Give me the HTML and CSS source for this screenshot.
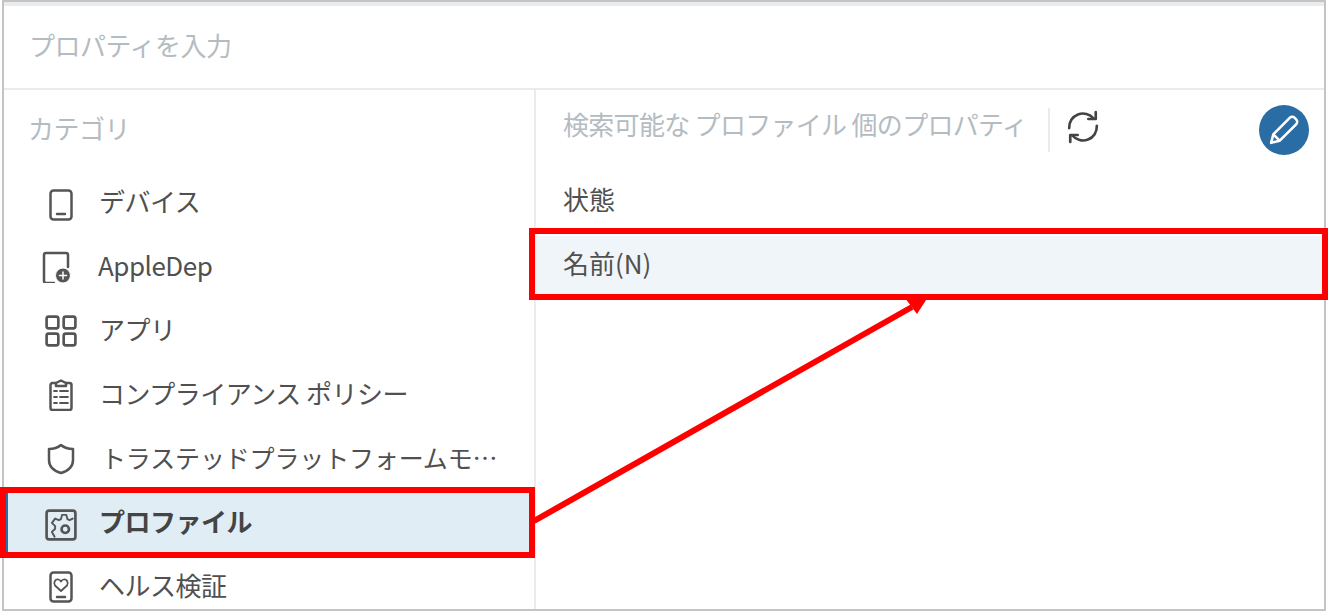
FILE: index.html
```html
<!DOCTYPE html>
<html lang="ja">
<head>
  <meta charset="UTF-8">
  <title>プロパティ</title>
  <link rel="stylesheet" href="styles.css">
</head>
<body>
  <div class="panel">
    <!-- Search -->
    <div class="search-row">プロパティを入力</div>

    <div class="columns">
      <!-- Categories -->
      <div class="categories">
        <div class="categories-title">カテゴリ</div>
        <div class="category">
          <svg class="icon icon-low" viewBox="0 0 24 32"><rect x="1.5" y="1.5" width="21" height="29" rx="3"/><line x1="8" x2="16" y1="25" y2="25"/></svg>
          <span class="category-name">デバイス</span>
        </div>
        <div class="category category-shift">
          <svg class="icon icon-apple" viewBox="0 0 32 32"><path d="M26 16V4a2 2 0 0 0-2-2H4a2 2 0 0 0-2 2v26a2 2 0 0 0 2 2h8"/><circle class="solid" cx="21" cy="24.500" r="7.500"/><path class="plus" d="M21 21v7M17.500 24.500h7"/></svg>
          <span class="category-name">AppleDep</span>
        </div>
        <div class="category">
          <svg class="icon" viewBox="0 0 30 30"><rect x="1.5" y="1.5" width="11" height="11" rx="2"/><rect x="17.5" y="1.5" width="11" height="11" rx="2"/><rect x="1.5" y="17.5" width="11" height="11" rx="2"/><rect x="17.5" y="17.5" width="11" height="11" rx="2"/></svg>
          <span class="category-name">アプリ</span>
        </div>
        <div class="category">
          <svg class="icon" viewBox="0 0 24 32"><path d="M7 4H3.500a2 2 0 0 0-2 2v23a2 2 0 0 0 2 2h17a2 2 0 0 0 2-2V6a2 2 0 0 0-2-2H17"/><path d="M7 7V4l5-2.500L17 4v3z"/><path class="thin" d="M5 12h3M11 12h8M5 18h3M11 18h8M5 24h3M11 24h8"/></svg>
          <span class="category-name">コンプライアンス ポリシー</span>
        </div>
        <div class="category">
          <svg class="icon" viewBox="0 0 28 32"><path d="M14 2c3 2.500 7 4 12 4v11c0 6.500-5 11-12 13C7 28 2 23.500 2 17V6c5 0 9-1.500 12-4z"/></svg>
          <span class="category-name category-long">トラステッドプラットフォームモ…</span>
        </div>
        <div class="category selected">
          <svg class="icon icon-low" viewBox="0 0 30 30"><rect x="1.500" y="1.500" width="27" height="27" rx="2.500"/><circle cx="19" cy="19" r="3.500"/><path class="thin" d="M26 9l-3 1.500-2-1-1-4h-4l-1 4-2 1-3.500-1.500-3 4 3 3v2.500l-3 3 2.500 4.500"/></svg>
          <span class="category-name">プロファイル</span>
        </div>
        <div class="category">
          <svg class="icon" viewBox="0 0 24 32"><rect x="1.5" y="1.5" width="21" height="29" rx="3"/><line x1="8" x2="16" y1="26" y2="26"/><path class="thin" d="M12 20l-6-5.500c-2-3 .5-7 3.500-6 1 .3 2 1 2.500 2 .5-1 1.500-1.700 2.500-2 3-1 5.500 3 3.500 6z"/></svg>
          <span class="category-name">ヘルス検証</span>
        </div>
      </div>

      <!-- Properties -->
      <div class="properties">
        <div class="properties-head">
          <span class="properties-title">検索可能な プロファイル 個のプロパティ</span>
          <span class="head-divider"></span>
          <svg class="refresh" viewBox="0 0 32 32"><path d="M3 17A13 13 0 0 1 26 8"/><path d="M28 2v6.500h-7"/><path d="M29 15A13 13 0 0 1 6 24"/><path d="M4 30v-6.500h7"/></svg>
          <button class="edit-button">
            <svg viewBox="0 0 28 28"><path d="M5 23l1.500-6L18 5.500a2.500 2.500 0 0 1 3.500 0l1 1a2.500 2.500 0 0 1 0 3.500L11 21.500z"/><path d="M6.500 17l4.500 4.500"/></svg>
          </button>
        </div>
        <div class="property property-plain">状態</div>
        <div class="property property-selected">名前(N)</div>
      </div>
    </div>
  </div>

  <!-- Red annotations over the screenshot -->
  <div class="callout callout-category"></div>
  <div class="callout callout-property"></div>
  <svg class="callout-arrow" viewBox="0 0 1328 611">
    <line x1="534" y1="521" x2="912" y2="307"/>
    <polygon points="928,297 905,298 917,314"/>
  </svg>
</body>
</html>
```

FILE: styles.css
```css
* {
  margin: 0;
  padding: 0;
  box-sizing: border-box;
}

html, body {
  height: 100%;
  overflow: hidden;
}

body {
  position: relative;
  background-color: #fff;
  color: #505050;
  font-family: "Noto Sans CJK JP", "Noto Sans", sans-serif;
  font-size: 26px;
  padding: 0 2px 0 2px;
}

.panel {
  height: 100%;
  display: flex;
  flex-direction: column;
  border: 2px solid #c4c4c4;
}

/* Search row */
.search-row {
  height: 88px;
  flex: none;
  padding: 17px 0 0 25px;
  border-top: 4px solid #e8ecee;
  border-bottom: 2px solid #e8ecee;
  color: #b4bcc2;
  font-size: 26px;
  line-height: 44px;
  letter-spacing: -0.5px;
}

.columns {
  flex: 1;
  display: flex;
  min-height: 0;
}

/* Categories */
.categories {
  width: 532px;
  flex: none;
  border-right: 2px solid #e8ecee;
  overflow: hidden;
}

.categories-title {
  height: 80px;
  padding: 16px 0 0 24px;
  color: #b4bcc2;
  font-size: 26px;
  line-height: 44px;
  letter-spacing: -0.5px;
}

.category {
  height: 64px;
  display: flex;
  align-items: center;
  padding-left: 41px;
}

.category-shift {
  padding-left: 38px;
}

.icon {
  width: 32px;
  height: 32px;
  flex: none;
  margin: 2px 22px 0 0;
  fill: none;
  stroke: #555;
  stroke-width: 2.500;
  stroke-linejoin: round;
  stroke-linecap: round;
}

.icon-low {
  margin-top: 5px;
}

.icon-apple {
  margin-right: 24px;
}

.icon .thin {
  stroke-width: 1.800;
}

.icon .solid {
  fill: #555;
  stroke: #fff;
  stroke-width: 1;
}

.icon .plus {
  stroke: #fff;
  stroke-width: 1.500;
}

.category-name {
  margin-bottom: 2px;
  font-size: 26px;
  line-height: 44px;
  letter-spacing: -0.5px;
  white-space: nowrap;
}

.category-long {
  margin-left: 2px;
  font-size: 25px;
  letter-spacing: -0.15px;
}

.category.selected {
  background-color: #e0edf5;
  color: #444;
  border-left: 4px solid #2a6da5;
  padding-left: 37px;
}

.selected .category-name {
  font-weight: 700;
}

/* Properties */
.properties {
  flex: 1;
  min-width: 0;
}

.properties-head {
  height: 80px;
  display: flex;
  align-items: center;
  padding: 0 15px 0 27px;
}

.properties-title {
  margin-bottom: 12px;
  color: #b4bcc2;
  font-size: 26px;
  line-height: 44px;
  letter-spacing: -0.7px;
  white-space: nowrap;
}

.head-divider {
  width: 2px;
  height: 44px;
  margin: 0 16px 0 21px;
  background-color: #e8ecee;
}

.refresh {
  width: 34px;
  height: 34px;
  margin-bottom: 6px;
  fill: none;
  stroke: #444;
  stroke-width: 2.500;
  stroke-linejoin: round;
  stroke-linecap: round;
}

.edit-button {
  width: 50px;
  height: 50px;
  margin-left: auto;
  display: flex;
  align-items: center;
  justify-content: center;
  border: none;
  border-radius: 50%;
  background-color: #2a6da5;
}

.edit-button svg {
  width: 40px;
  height: 40px;
  flex: none;
  fill: none;
  stroke: #fff;
  stroke-width: 1.800;
  stroke-linejoin: round;
}

.property {
  height: 64px;
  display: flex;
  align-items: center;
  padding-left: 27px;
  font-size: 26px;
}

.property-plain {
  padding-bottom: 8px;
}

.property-selected {
  height: 62px;
  margin-top: 2px;
  padding-bottom: 10px;
  background-color: #f0f5f9;
}

/* Annotations */
.callout {
  position: absolute;
  border: 6px solid #f00;
}

.callout-category {
  left: 0;
  top: 487px;
  width: 535px;
  height: 71px;
}

.callout-property {
  left: 529px;
  top: 228px;
  width: 799px;
  height: 72px;
}

.callout-arrow {
  position: absolute;
  left: 0;
  top: 0;
  width: 1328px;
  height: 611px;
  pointer-events: none;
}

.callout-arrow line {
  stroke: #f00;
  stroke-width: 6;
}

.callout-arrow polygon {
  fill: #f00;
}
```
